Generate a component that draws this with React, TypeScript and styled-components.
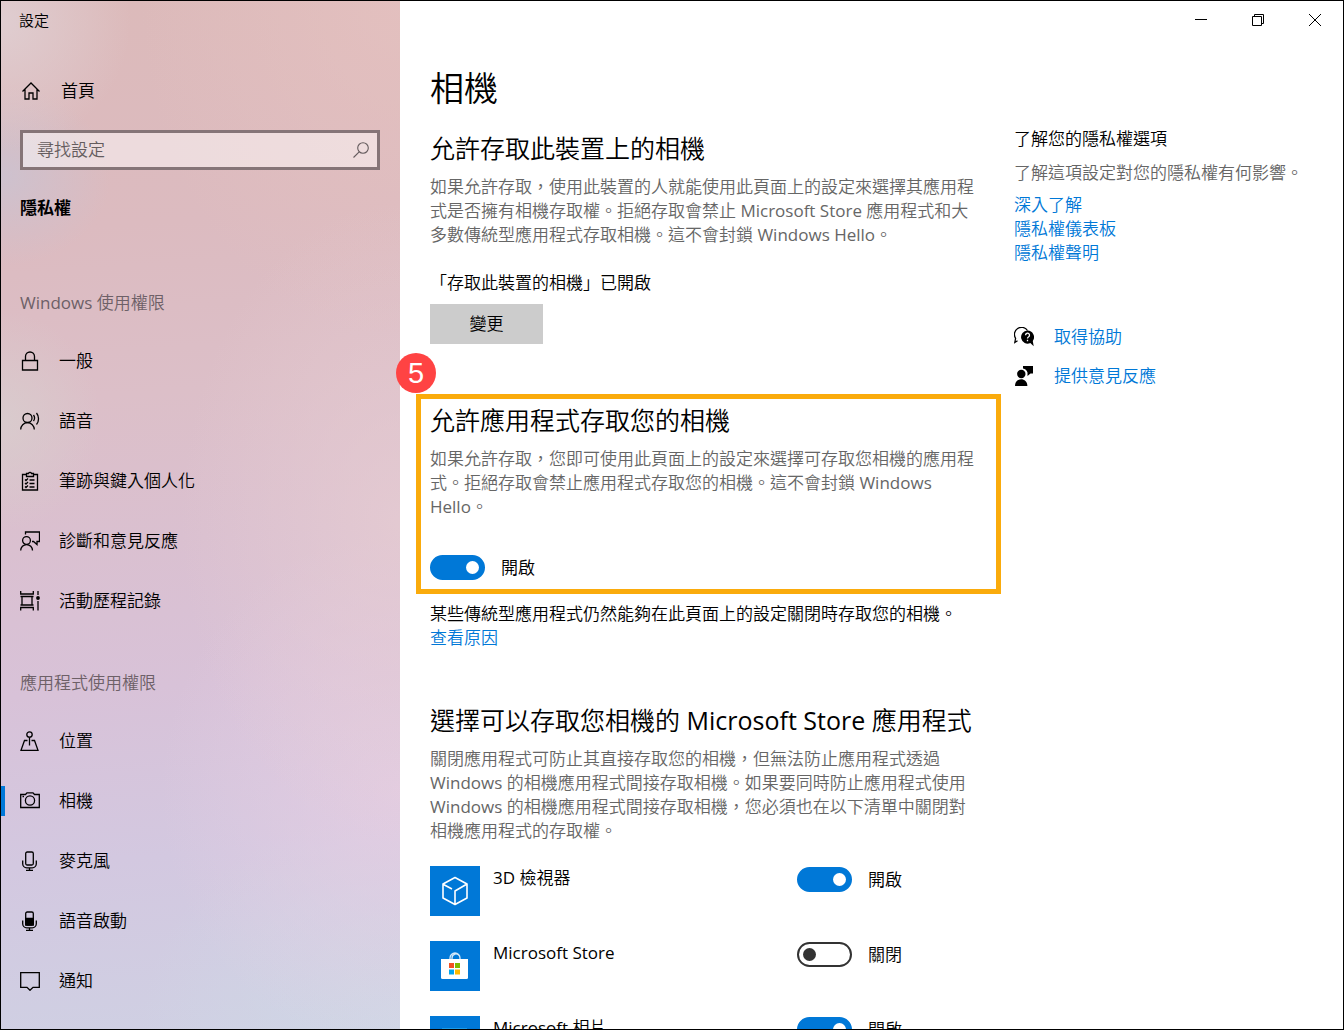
import React, { useId, useState } from "react";
import styled, { createGlobalStyle } from "styled-components";

const GlobalStyle = createGlobalStyle`
  *, *::before, *::after { box-sizing: border-box; }
  body {
    margin: 0;
    background: #fff;
    color: #000;
    font-family: "Open Sans", "Noto Sans CJK TC DemiLight", "Noto Sans CJK TC", sans-serif;
    font-size: 17px;
    font-weight: 400;
    line-height: 24px;
  }
  h1, h2, h3, p, ul { margin: 0; padding: 0; }
  ul { list-style: none; }
  button, input { font: inherit; color: inherit; }
`;

const Window = styled.div`
  display: grid;
  grid-template-columns: 399px minmax(0, 1fr);
  height: 100vh;
  border: 1px solid #000;
  overflow: hidden;
`;

const Sidebar = styled.aside`
  display: flex;
  flex-direction: column;
  min-height: 0;
  overflow: hidden;
  background:
    radial-gradient(circle 130px at 0 20px, rgba(224, 210, 214, 0.8), transparent),
    radial-gradient(ellipse 110px 90px at 0 175px, rgba(200, 196, 212, 0.75), transparent),
    radial-gradient(ellipse 100px 110px at 0 420px, rgba(216, 206, 206, 0.8), transparent),
    radial-gradient(ellipse 220px 320px at 100% 520px, rgba(231, 205, 210, 0.7), transparent),
    radial-gradient(ellipse 240px 260px at 100% 790px, rgba(230, 206, 226, 0.8), transparent),
    radial-gradient(ellipse 260px 220px at 100% 100%, rgba(208, 216, 230, 0.9), transparent),
    radial-gradient(ellipse 260px 340px at 100% 0, rgba(230, 194, 192, 0.7), transparent),
    linear-gradient(176deg, #dcbaba 0%, #dcbbc0 22%, #dcbfc8 38%, #dac0d0 52%, #d8c2d8 66%, #d3c8e0 82%, #cfd0e3 100%);
`;

const AppTitle = styled.div`
  padding: 7px 18px;
  font-size: 15px;
`;

const HomeLink = styled.a`
  display: flex;
  align-items: center;
  gap: 20px;
  margin-top: 32px;
  padding: 0 20px;
  height: 40px;
  color: #000;
  text-decoration: none;
`;

const SearchBox = styled.label`
  display: flex;
  align-items: center;
  margin: 19px 20px 0 19px;
  height: 40px;
  padding: 0 6px 0 14px;
  border: 3px solid #857477;
  background: rgba(255, 255, 255, 0.48);
  color: #000;
  & > svg {
    color: #655c5e;
    stroke-width: 1.1;
  }
`;

const SearchInput = styled.input`
  flex: 1;
  min-width: 0;
  padding: 0;
  border: 0;
  outline: 0;
  background: transparent;
  &::placeholder { color: #655c5e; opacity: 1; }
`;

const SectionTitle = styled.h3`
  margin: 26px 19px 31px;
  font-family: "Open Sans", "Noto Sans CJK TC", sans-serif;
  font-size: 17px;
  font-weight: 700;
`;

const NavGroup = styled.section`
  padding-top: 40px;
`;

const NavHeading = styled.h3`
  padding: 0 19px 16px;
  font-size: 17px;
  font-weight: 400;
  color: #6d6067;
`;

const NavLink = styled.a<{ $active?: boolean }>`
  display: flex;
  align-items: center;
  height: 60px;
  color: #000;
  text-decoration: none;
  &::before {
    content: "";
    width: 4px;
    height: 30px;
    background: ${(p) => (p.$active ? "#0078d7" : "transparent")};
  }
  & > svg { margin: 0 19px 0 15px; }
`;

const Icon = styled.svg`
  flex: none;
  display: block;
  width: 20px;
  height: 20px;
  fill: none;
  stroke: currentColor;
  stroke-width: 1.3;
`;

const Main = styled.main`
  display: flex;
  flex-direction: column;
  min-width: 0;
  min-height: 0;
  background: #fff;
`;

const TitleBar = styled.header`
  flex: none;
  display: flex;
  justify-content: flex-end;
  height: 38px;
`;

const CaptionButton = styled.button`
  display: grid;
  place-items: center;
  width: 57px;
  padding: 0;
  border: 0;
  background: transparent;
`;

const CaptionIcon = styled.svg`
  width: 14px;
  height: 14px;
  fill: none;
  stroke: #000;
  stroke-width: 1;
`;

const Body = styled.div`
  flex: 1;
  min-height: 0;
  display: grid;
  grid-template-columns: minmax(0, 560px) minmax(0, 300px);
  gap: 24px;
  padding: 25px 24px 0 30px;
`;

const PageTitle = styled.h1`
  font-size: 34px;
  line-height: 48px;
  font-weight: 400;
`;

const Heading = styled.h2`
  font-size: 25px;
  line-height: 32px;
  font-weight: 400;
  white-space: nowrap;
`;

const Text = styled.p<{ $muted?: boolean }>`
  color: ${(p) => (p.$muted ? "#666" : "#000")};
`;

const Block = styled.section<{ $top: number }>`
  margin-top: ${(p) => p.$top}px;
  & > ${Heading} + ${Text} { margin-top: 11px; }
`;

const Status = styled(Text)`
  margin-top: 24px;
`;

const ChangeButton = styled.button`
  display: block;
  width: 113px;
  height: 40px;
  margin-top: 9px;
  padding: 0;
  border: 0;
  background: #ccc;
`;

const Highlight = styled(Block)`
  position: relative;
  margin-left: -14px;
  margin-right: -11px;
  padding: 5px 0 9px 9px;
  border: 5px solid #faab0c;
`;

const StepBadge = styled.span`
  position: absolute;
  left: -25px;
  top: -46px;
  display: grid;
  place-items: center;
  width: 40px;
  height: 40px;
  border-radius: 50%;
  background: #ff4343;
  color: #fff;
  font: 29px/40px "Liberation Sans", sans-serif;
`;

const SwitchLabel = styled.label`
  display: flex;
  align-items: center;
  gap: 16px;
  height: 25px;
`;

const SwitchInput = styled.input`
  appearance: none;
  display: flex;
  align-items: center;
  width: 55px;
  height: 25px;
  margin: 0;
  padding: 0 4px;
  border: 2px solid #333;
  border-radius: 13px;
  background: #fff;
  &::before {
    content: "";
    width: 13px;
    height: 13px;
    border-radius: 50%;
    background: #333;
  }
  &:checked {
    justify-content: flex-end;
    border-color: #0078d7;
    background: #0078d7;
  }
  &:checked::before { background: #fff; }
`;

const SwitchSpace = styled.div`
  margin-top: 36px;
`;

const Link = styled.a`
  color: #0078d7;
  text-decoration: none;
`;

const AppList = styled.ul`
  display: grid;
  gap: 25px;
  margin-top: 23px;
`;

const AppRow = styled.li`
  display: grid;
  grid-template-columns: 50px minmax(0, 1fr) 193px;
  column-gap: 13px;
  height: 50px;
  & > label { margin-top: 1px; }
`;

const Tile = styled.svg`
  width: 50px;
  height: 50px;
  background: #0078d7;
`;

const Related = styled.aside`
  display: flex;
  flex-direction: column;
  align-items: flex-start;
  padding-top: 63px;
  white-space: nowrap;
  & > ${Text} + ${Text} { margin-top: 10px; margin-bottom: 8px; }
`;

const HelpLinks = styled.nav`
  display: grid;
  gap: 15px;
  margin-top: 60px;
`;

const HelpLink = styled(Link)`
  display: flex;
  align-items: center;
  gap: 20px;
  & > svg { color: #000; }
`;

const icons = {
  home: <path d="M1.500 10.500 10 2l8.500 8.500M4 8.500V18h4v-6h4v6h4V8.500" />,
  lock: <path d="M2.500 9.500h15v9.500h-15zM5.500 9.500V5.500a4.500 4.500 0 0 1 9 0v4" />,
  speech: (
    <>
      <circle cx="7.500" cy="7" r="4.500" />
      <path d="M.7 18.500a6.800 6.800 0 0 1 13.600 0M13.500 4c1.300 1.800 1.300 4.200 0 6M16.500 2c2.700 3.200 2.700 8.500 0 11.500" />
    </>
  ),
  clipboard: (
    <>
      <path d="M6.500 3.500h-4v15.500h15V3.500h-4M6.500 5.500v-3h2a1.600 1.600 0 0 1 3 0h2v3z" />
      <path d="m5 8.500 1 1 2-2M5 12l1 1 2-2M5 15.500l1 1 2-2M9.500 9h5M9.500 12.500h5M9.500 16h5" />
    </>
  ),
  feedback: (
    <>
      <circle cx="6.500" cy="9.500" r="3.900" />
      <path d="M.7 19.500a5.900 5.900 0 0 1 11.800 0M5.500 3.500V1h14v9.500h-2.500v3L13.500 10.500h-1.500" />
    </>
  ),
  activity: (
    <>
      <path d="M.7 0v3h12.600V0M2 5.500h10v8.500H2zM.5 5.500h13M.5 14h13M.7 19.500v-3h12.600v3M18 0v4M18 10v9.500" />
      <circle cx="18" cy="7" r="1.900" fill="currentColor" stroke="none" />
    </>
  ),
  location: (
    <>
      <circle cx="9.500" cy="3.500" r="2.700" />
      <path d="M9.500 6.200V14.500M7.500 9.500H4.500L1 19.300h17L14.500 9.500H11.500" />
    </>
  ),
  camera: (
    <>
      <path d="M.7 3.500h4.800L7 1.800h6l1.500 1.700h4.800v13H.7z" />
      <circle cx="10" cy="9.500" r="4.600" />
      <path d="M2.500 5.500h1.500" />
    </>
  ),
  mic: (
    <>
      <rect x="5.700" y="1" width="7.600" height="13" rx="1.500" />
      <path d="M2.700 9.500v3.300a4 4 0 0 0 4 4h5.600a4 4 0 0 0 4-4V9.500M9.500 16.800v3M6 19.500h7" />
    </>
  ),
  voice: (
    <>
      <rect x="5.700" y="1" width="7.600" height="13" rx="1.500" />
      <path d="M5.700 7.500h7.600v6.500H5.700z" fill="currentColor" />
      <path d="M2.700 9.500v3.300a4 4 0 0 0 4 4h5.600a4 4 0 0 0 4-4V9.500M9.500 16.800v3M6 19.500h7" />
    </>
  ),
  message: <path d="M.7 1.700h18.600v14.600H13l-3 3-3-3H.7z" />,
  search: (
    <>
      <circle cx="12" cy="8" r="5.300" />
      <path d="M8.200 11.800 2.500 17.500" />
    </>
  ),
  help: (
    <>
      <path d="M3.500 13.800 .8 15.500l.8-4.200A6.500 6.500 0 1 1 13.500 3.500" />
      <path d="M13.500 3.600a6.500 6.500 0 1 0 2.800 12.400l3.400 3.300-.9-5.400A6.500 6.500 0 0 0 13.500 3.600z" fill="currentColor" stroke="none" />
      <path d="M11.500 8.300a2 2 0 1 1 2.900 1.700c-.7.4-.9.800-.9 1.600M13.500 12.800v1.500" stroke="#fff" />
    </>
  ),
  person: (
    <g fill="currentColor" stroke="none">
      <circle cx="7.300" cy="8" r="4.200" />
      <path d="M1 20c0-9 12.400-9 12.400 0zM9 0H19v7.500h-2.500L13.500 10V6.500A6 6 0 0 0 9 2.500z" />
    </g>
  ),
};

type IconName = keyof typeof icons;

const Glyph = ({ name }: { name: IconName }) => (
  <Icon viewBox="0 0 20 20" aria-hidden="true">{icons[name]}</Icon>
);

type NavItem = { label: string; icon: IconName; active?: boolean };

const windowsItems: NavItem[] = [
  { label: "一般", icon: "lock" },
  { label: "語音", icon: "speech" },
  { label: "筆跡與鍵入個人化", icon: "clipboard" },
  { label: "診斷和意見反應", icon: "feedback" },
  { label: "活動歷程記錄", icon: "activity" },
];

const appItems: NavItem[] = [
  { label: "位置", icon: "location" },
  { label: "相機", icon: "camera", active: true },
  { label: "麥克風", icon: "mic" },
  { label: "語音啟動", icon: "voice" },
  { label: "通知", icon: "message" },
];

const Group = ({ title, items }: { title: string; items: NavItem[] }) => (
  <NavGroup>
    <NavHeading>{title}</NavHeading>
    {items.map((item) => (
      <NavLink key={item.label} href="#" $active={item.active} aria-current={item.active ? "page" : undefined}>
        <Glyph name={item.icon} />
        {item.label}
      </NavLink>
    ))}
  </NavGroup>
);

const Switch = ({ initial }: { initial: boolean }) => {
  const id = useId();
  const [on, setOn] = useState(initial);
  return (
    <SwitchLabel htmlFor={id}>
      <SwitchInput id={id} type="checkbox" checked={on} onChange={() => setOn(!on)} />
      {on ? "開啟" : "關閉"}
    </SwitchLabel>
  );
};

const apps = [
  {
    name: "3D 檢視器",
    on: true,
    art: (
      <path
        d="M25 11.500 37 18v14L25 38.500 13 32V18zM13.500 18.500l8.500 4.500M37 18 25 25v13.500"
        fill="none"
        stroke="#fff"
        strokeWidth="1.600"
        strokeLinejoin="round"
      />
    ),
  },
  {
    name: "Microsoft Store",
    on: false,
    art: (
      <>
        <path d="M20 18v-1a5 5 0 0 1 10 0v1M22 18v-1a4 4 0 0 1 7.500-2" fill="none" stroke="#d5e8f8" strokeWidth="1.300" />
        <path d="M11 18h27v18.500a1.500 1.500 0 0 1-1.500 1.500h-24a1.500 1.500 0 0 1-1.500-1.500z" fill="#fff" />
        <path d="M19 22h5v5h-5z" fill="#f25022" />
        <path d="M25 22h5v5h-5z" fill="#7fba00" />
        <path d="M19 28.500h5v5h-5z" fill="#00a4ef" />
        <path d="M25 28.500h5v5h-5z" fill="#ffb900" />
      </>
    ),
  },
  {
    name: "Microsoft 相片",
    on: true,
    art: <path d="M12 12h25v20H12z" fill="#1a9bea" />,
  },
];

export default function App() {
  return (
    <>
      <GlobalStyle />
      <Window lang="zh-Hant">
        <Sidebar>
          <AppTitle>設定</AppTitle>
          <HomeLink href="#">
            <Glyph name="home" />
            首頁
          </HomeLink>
          <SearchBox>
            <SearchInput type="text" placeholder="尋找設定" aria-label="尋找設定" />
            <Glyph name="search" />
          </SearchBox>
          <SectionTitle>隱私權</SectionTitle>
          <Group title="Windows 使用權限" items={windowsItems} />
          <Group title="應用程式使用權限" items={appItems} />
        </Sidebar>
        <Main>
          <TitleBar>
            <CaptionButton aria-label="最小化">
              <CaptionIcon viewBox="0 0 14 14"><path d="M1 6.500h12" /></CaptionIcon>
            </CaptionButton>
            <CaptionButton aria-label="還原">
              <CaptionIcon viewBox="0 0 14 14"><path d="M1.500 3.500h9v9h-9zM3.500 3.500v-2h9v9h-2" /></CaptionIcon>
            </CaptionButton>
            <CaptionButton aria-label="關閉">
              <CaptionIcon viewBox="0 0 14 14"><path d="m1 1 12 12M13 1 1 13" /></CaptionIcon>
            </CaptionButton>
          </TitleBar>
          <Body>
            <div>
              <PageTitle>相機</PageTitle>
              <Block $top={20}>
                <Heading>允許存取此裝置上的相機</Heading>
                <Text $muted>
                  如果允許存取，使用此裝置的人就能使用此頁面上的設定來選擇其應用程<br />
                  式是否擁有相機存取權。拒絕存取會禁止 Microsoft Store 應用程式和大<br />
                  多數傳統型應用程式存取相機。這不會封鎖 Windows Hello。
                </Text>
                <Status>「存取此裝置的相機」已開啟</Status>
                <ChangeButton>變更</ChangeButton>
              </Block>
              <Highlight $top={50}>
                <StepBadge>5</StepBadge>
                <Heading>允許應用程式存取您的相機</Heading>
                <Text $muted>
                  如果允許存取，您即可使用此頁面上的設定來選擇可存取您相機的應用程<br />
                  式。拒絕存取會禁止應用程式存取您的相機。這不會封鎖 Windows<br />
                  Hello。
                </Text>
                <SwitchSpace>
                  <Switch initial />
                </SwitchSpace>
              </Highlight>
              <Block $top={8}>
                <Text>某些傳統型應用程式仍然能夠在此頁面上的設定關閉時存取您的相機。</Text>
                <Link href="#">查看原因</Link>
              </Block>
              <Block $top={54}>
                <Heading>選擇可以存取您相機的 Microsoft Store 應用程式</Heading>
                <Text $muted>
                  關閉應用程式可防止其直接存取您的相機，但無法防止應用程式透過<br />
                  Windows 的相機應用程式間接存取相機。如果要同時防止應用程式使用<br />
                  Windows 的相機應用程式間接存取相機，您必須也在以下清單中關閉對<br />
                  相機應用程式的存取權。
                </Text>
                <AppList>
                  {apps.map((app) => (
                    <AppRow key={app.name}>
                      <Tile viewBox="0 0 50 50" aria-hidden="true">{app.art}</Tile>
                      <span>{app.name}</span>
                      <Switch initial={app.on} />
                    </AppRow>
                  ))}
                </AppList>
              </Block>
            </div>
            <Related>
              <Text>了解您的隱私權選項</Text>
              <Text $muted>了解這項設定對您的隱私權有何影響。</Text>
              <Link href="#">深入了解</Link>
              <Link href="#">隱私權儀表板</Link>
              <Link href="#">隱私權聲明</Link>
              <HelpLinks>
                <HelpLink href="#"><Glyph name="help" />取得協助</HelpLink>
                <HelpLink href="#"><Glyph name="person" />提供意見反應</HelpLink>
              </HelpLinks>
            </Related>
          </Body>
        </Main>
      </Window>
    </>
  );
}
